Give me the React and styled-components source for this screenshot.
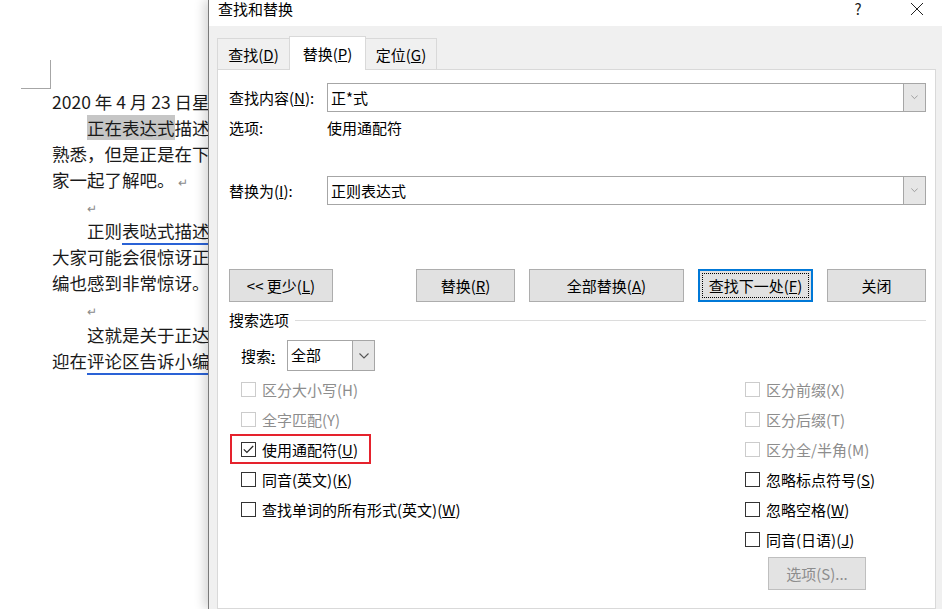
import styled, { createGlobalStyle, css } from 'styled-components';

const GlobalStyle = createGlobalStyle`
  html, body {
    margin: 0;
    padding: 0;
    background: #ffffff;
  }
  body {
    font-family: "Noto Sans CJK SC", "Noto Sans", sans-serif;
    color: #000;
  }
`

const Page = styled.div`
  position: relative;
  width: 942px;
  height: 609px;
  overflow: hidden;
  background: #fff;
`

// ---------- document behind the dialog ----------

const Doc = styled.div`
  padding-left: 52px;
  font-size: 17.5px;
  color: #1a1a1a;
`

const CornerMark = styled.div`
  margin-left: -31px;
  margin-top: 60px;
  width: 29px;
  height: 28px;
  border-right: 1px solid #a6a6a6;
  border-bottom: 1px solid #a6a6a6;
`

const Line = styled.div`
  height: 25.9px;
  line-height: 25.9px;
  white-space: nowrap;
  padding-left: ${p => (p.$indent ? '35px' : '0')};
`

const Mark = styled.span`
  background: #c6c6c6;
`

const Squiggle = styled.span`
  border-bottom: 2px solid #2a62d6;
`

const Para = styled.span`
  color: #8a8a8a;
  font-size: 12px;
  margin-left: ${p => (p.$bare ? 0 : 3)}px;
`

// ---------- dialog ----------

const Dialog = styled.div`
  position: absolute;
  left: 208px;
  top: 0;
  right: 0;
  bottom: 0;
  border-left: 1px solid #7a7a7a;
  background: #f0f0f0;
  box-shadow: -4px 0 10px rgba(0, 0, 0, 0.16);
  display: flex;
  flex-direction: column;
`

const TitleBar = styled.div`
  height: 26px;
  background: #fff;
  display: flex;
  align-items: flex-start;
  padding: 1px 0 0 9px;
  box-sizing: border-box;
  font-size: 15px;
  line-height: 16px;
`

const TitleText = styled.div`
  flex: 1;
`

const TitleBtn = styled.div`
  width: ${p => p.$w}px;
  margin-left: ${p => p.$ml || 0}px;
  display: flex;
  justify-content: center;
  color: #222;
`

const Body = styled.div`
  flex: 1;
  padding: 10px 6px 0 8px;
  display: flex;
  flex-direction: column;
`

const Tabs = styled.div`
  display: flex;
  align-items: flex-end;
  height: 33px;
`

const Tab = styled.div`
  width: ${p => p.$w}px;
  height: 31px;
  box-sizing: border-box;
  border: 1px solid #d9d9d9;
  border-bottom: none;
  margin-left: -1px;
  display: flex;
  align-items: center;
  justify-content: center;
  font-size: 15px;
  background: #f0f0f0;
  &:first-child {
    margin-left: 0;
  }
  ${p => p.$active && css`
    height: 34px;
    background: #fff;
    margin-bottom: -1px;
    position: relative;
    z-index: 1;
  `}
`

const Panel = styled.div`
  flex: 1;
  width: 719px;
  box-sizing: border-box;
  background: #fff;
  border: 1px solid #d9d9d9;
  padding: 13px 9px 0 11px;
  font-size: 15px;
  display: flex;
  flex-direction: column;
`

const FieldRow = styled.div`
  display: grid;
  grid-template-columns: 98px 1fr;
  align-items: center;
  margin-top: ${p => p.$mt || 0}px;
`

const Label = styled.div`
  line-height: 18px;
  white-space: nowrap;
`

const Combo = styled.div`
  height: 29px;
  box-sizing: border-box;
  border: 1px solid #a6a6a6;
  display: flex;
  align-items: stretch;
`

const ComboText = styled.div`
  flex: 1;
  padding-left: 3px;
  line-height: 27px;
  font-size: 15px;
`

const DropBtn = styled.div`
  width: ${p => p.$w}px;
  background: #e6e6e6;
  border-left: 1px solid #a6a6a6;
  display: flex;
  align-items: center;
  justify-content: center;
`

const InfoRow = styled.div`
  display: grid;
  grid-template-columns: 98px 1fr;
  margin-top: 7px;
  height: 18px;
  line-height: 18px;
`

const ButtonRow = styled.div`
  display: flex;
  justify-content: space-between;
  margin-top: 64px;
`

const ButtonGroup = styled.div`
  display: flex;
  gap: 14px;
`

const Button = styled.div`
  position: relative;
  width: ${p => p.$w}px;
  height: 33px;
  box-sizing: border-box;
  background: #e1e1e1;
  border: 1px solid #adadad;
  display: flex;
  align-items: center;
  justify-content: center;
  font-size: 15px;
  white-space: nowrap;
  color: ${p => (p.$disabled ? '#8d8d8d' : '#000')};
  ${p => p.$disabled && css`
    border-color: #bfbfbf;
    background: #e3e3e3;
  `}
  ${p => p.$default && css`
    border: 2px solid #0078d7;
    &::after {
      content: '';
      position: absolute;
      inset: 2px;
      border: 1px dotted #000;
    }
  `}
`

const SectionHead = styled.div`
  display: flex;
  align-items: center;
  gap: 6px;
  margin-top: 8px;
  height: 20px;
  line-height: 20px;
  &::after {
    content: '';
    flex: 1;
    height: 1px;
    background: #dcdcdc;
  }
`

const SearchRow = styled.div`
  display: flex;
  align-items: center;
  margin-top: 10px;
  padding-left: 12px;
`

const SearchLabel = styled.span`
  width: 46px;
`

const Select = styled.div`
  width: 88px;
  height: 31px;
  box-sizing: border-box;
  border: 1px solid #a6a6a6;
  display: flex;
  align-items: stretch;
`

const Options = styled.div`
  display: grid;
  grid-template-columns: 504px 1fr;
  padding-left: 12px;
  margin-top: 3px;
`

const Column = styled.div`
  display: flex;
  flex-direction: column;
`

const CheckRow = styled.div`
  position: relative;
  height: 30px;
  display: flex;
  align-items: center;
  gap: 6px;
  white-space: nowrap;
  color: ${p => (p.$disabled ? '#8d8d8d' : '#000')};
  ${p => p.$highlight && css`
    &::after {
      content: '';
      position: absolute;
      left: -11px;
      top: 0;
      width: 141px;
      height: 30px;
      box-sizing: border-box;
      border: 2.5px solid #e5222d;
    }
  `}
`

const Box = styled.div`
  width: 15px;
  height: 15px;
  flex: none;
  box-sizing: border-box;
  border: 1px solid ${p => (p.$disabled ? '#cccccc' : '#333333')};
  background: #fff;
  display: flex;
  align-items: center;
  justify-content: center;
`

const OptionsBtnWrap = styled.div`
  margin-top: 3px;
  padding-left: 23px;
`

const Chevron = ({ size = 7, color = '#8a8a8a' }) => (
  <svg width={size} height={size / 2 + 1} viewBox="0 0 10 6">
    <polyline points="0.5,0.5 5,5 9.5,0.5" fill="none" stroke={color} strokeWidth="1.1" />
  </svg>
)

const Check = ({ checked, disabled, children, highlight }) => (
  <CheckRow $disabled={disabled} $highlight={highlight}>
    <Box $disabled={disabled}>
      {checked && (
        <svg width="11" height="9" viewBox="0 0 11 9">
          <polyline points="0.8,4.4 3.9,7.5 10.2,1" fill="none" stroke="#222" strokeWidth="1.2" />
        </svg>
      )}
    </Box>
    <span>{children}</span>
  </CheckRow>
)

const App = () => {
  return (
    <Page>
      <GlobalStyle />
      <Doc>
        <CornerMark />
        <Line>2020 年 4 月 23 日星期四</Line>
        <Line $indent><Mark>正在表达式</Mark>描述了一种字符串匹配的模式，可能很多人都不太</Line>
        <Line>熟悉，但是正是在下编辑的文章中，我们将和大</Line>
        <Line>家一起了解吧。<Para>↵</Para></Line>
        <Line $indent><Para $bare>↵</Para></Line>
        <Line $indent>正则<Squiggle>表哒式描述</Squiggle>了一种字符串匹配的模式，</Line>
        <Line>大家可能会很惊讶正则表达式的用途，其实小</Line>
        <Line>编也感到非常惊讶。<Para>↵</Para></Line>
        <Line $indent><Para $bare>↵</Para></Line>
        <Line $indent>这就是关于正达式的全部内容，如有问题，欢</Line>
        <Line>迎在<Squiggle>评论区告诉小编</Squiggle>吧。</Line>
      </Doc>

      <Dialog>
        <TitleBar>
          <TitleText>查找和替换</TitleText>
          <TitleBtn $w={48}>?</TitleBtn>
          <TitleBtn $w={50} $ml={10}>
            <svg width="14" height="14" viewBox="0 0 14 14" style={{ marginTop: 1 }}>
              <path d="M1 1 L13 13 M13 1 L1 13" stroke="#222" strokeWidth="1" />
            </svg>
          </TitleBtn>
        </TitleBar>
        <Body>
          <Tabs>
            <Tab $w={73}>查找(<u>D</u>)</Tab>
            <Tab $w={77} $active>替换(<u>P</u>)</Tab>
            <Tab $w={72}>定位(<u>G</u>)</Tab>
          </Tabs>
          <Panel>
            <FieldRow>
              <Label>查找内容(<u>N</u>):</Label>
              <Combo>
                <ComboText>正*式</ComboText>
                <DropBtn $w={21}><Chevron /></DropBtn>
              </Combo>
            </FieldRow>
            <InfoRow>
              <span>选项:</span>
              <span>使用通配符</span>
            </InfoRow>
            <FieldRow $mt={39}>
              <Label>替换为(<u>I</u>):</Label>
              <Combo>
                <ComboText>正则表达式</ComboText>
                <DropBtn $w={21}><Chevron /></DropBtn>
              </Combo>
            </FieldRow>
            <ButtonRow>
              <Button $w={104}>&lt;&lt; 更少(<u>L</u>)</Button>
              <ButtonGroup>
                <Button $w={99}>替换(<u>R</u>)</Button>
                <Button $w={155}>全部替换(<u>A</u>)</Button>
                <Button $w={115} $default>查找下一处(<u>F</u>)</Button>
                <Button $w={99}>关闭</Button>
              </ButtonGroup>
            </ButtonRow>
            <SectionHead>搜索选项</SectionHead>
            <SearchRow>
              <SearchLabel>搜索<u>:</u></SearchLabel>
              <Select>
                <ComboText>全部</ComboText>
                <DropBtn $w={21}><Chevron size={10} color="#555" /></DropBtn>
              </Select>
            </SearchRow>
            <Options>
              <Column>
                <Check disabled>区分大小写(H)</Check>
                <Check disabled>全字匹配(Y)</Check>
                <Check checked highlight>使用通配符(<u>U</u>)</Check>
                <Check>同音(英文)(<u>K</u>)</Check>
                <Check>查找单词的所有形式(英文)(<u>W</u>)</Check>
              </Column>
              <Column>
                <Check disabled>区分前缀(X)</Check>
                <Check disabled>区分后缀(T)</Check>
                <Check disabled>区分全/半角(M)</Check>
                <Check>忽略标点符号(<u>S</u>)</Check>
                <Check>忽略空格(<u>W</u>)</Check>
                <Check>同音(日语)(<u>J</u>)</Check>
                <OptionsBtnWrap>
                  <Button $w={98} $disabled>选项(S)...</Button>
                </OptionsBtnWrap>
              </Column>
            </Options>
          </Panel>
        </Body>
      </Dialog>
    </Page>
  );
}

export default App;
